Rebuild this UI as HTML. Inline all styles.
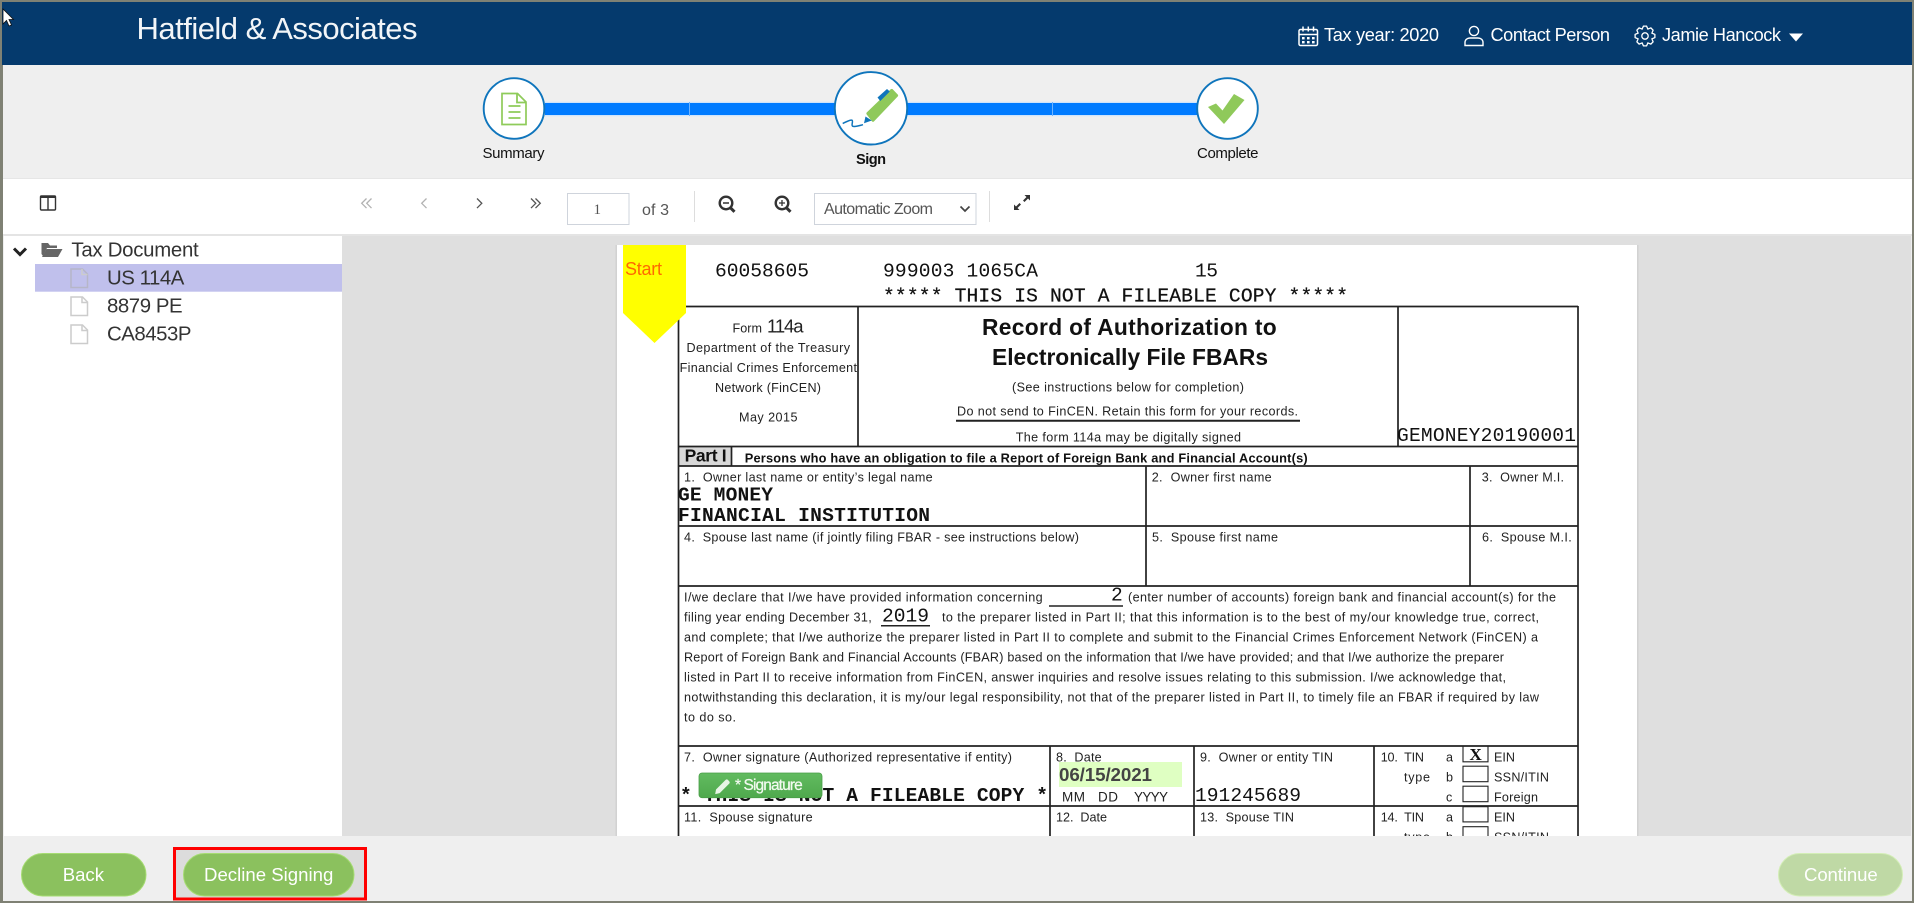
<!DOCTYPE html>
<html lang="en"><head><meta charset="utf-8"><title>Hatfield &amp; Associates</title>
<style>
html,body{margin:0;padding:0;width:1914px;height:903px;overflow:hidden;background:#efefef}
svg{display:block;position:absolute;left:0;top:0}
text{font-family:"Liberation Sans",Arial,sans-serif;white-space:pre}
.m{font-family:"Liberation Mono",monospace;font-size:19.6px;fill:#111}
.mb{font-family:"Liberation Mono",monospace;font-size:19.6px;fill:#111;font-weight:bold}
.f{font-size:12.6px;fill:#222}
.h{font-size:18.2px;fill:#fff}
.s{font-size:20.4px;fill:#333}
.b{font-size:18.6px;fill:#fff}
.l{stroke:#222;stroke-width:1.7;fill:none}
</style></head><body>
<svg width="1914" height="903" viewBox="0 0 1914 903" xmlns="http://www.w3.org/2000/svg">
<rect width="1914" height="903" fill="#7f8174"/>
<rect x="3" y="65" width="1909" height="836" fill="#efefef"/>
<rect x="2" y="2" width="1910" height="63" fill="#053a6d"/>
<text x="136.5" y="39" font-size="31" fill="#f2f5f8" textLength="281">Hatfield &amp; Associates</text>

<!-- calendar -->
<g fill="none" stroke="#fff" stroke-width="1.5">
<rect x="1299" y="29.5" width="18.5" height="16" rx="1.5"/>
<path d="M1299 34.5h18.5M1303 26.5v5M1308.3 26.5v5M1313.5 26.5v5"/>
</g>
<g fill="#fff"><rect x="1302" y="37" width="2.6" height="2.4"/><rect x="1307" y="37" width="2.6" height="2.4"/><rect x="1312" y="37" width="2.6" height="2.4"/><rect x="1302" y="41" width="2.6" height="2.4"/><rect x="1307" y="41" width="2.6" height="2.4"/><rect x="1312" y="41" width="2.6" height="2.4"/></g>
<text class="h" x="1324" y="41" textLength="115">Tax year: 2020</text>
<!-- user -->
<g fill="none" stroke="#fff" stroke-width="1.4">
<circle cx="1474" cy="31" r="4.6"/>
<path d="M1465 45.5v-3c0-3 2.5-4.500 5-4.500h8c2.500 0 5 1.500 5 4.500v3z"/>
</g>
<text class="h" x="1490.500" y="41" textLength="119.500">Contact Person</text>
<!-- gear -->
<g transform="translate(1645 36)" fill="none" stroke="#fff" stroke-width="1.300">
<path d="M9.88-1.56L9.88 1.56 6.93 2.87 8.09 5.88 5.88 8.09 2.87 6.93 1.56 9.88-1.56 9.88-2.87 6.93-5.88 8.09-8.09 5.88-6.93 2.87-9.88 1.56-9.88-1.56-6.93-2.87-8.09-5.88-5.88-8.09-2.87-6.93-1.56-9.88 1.56-9.88 2.87-6.93 5.88-8.09 8.09-5.88 6.93-2.87Z"/>
<circle r="3.200"/>
</g>
<text class="h" x="1662" y="41" textLength="119">Jamie Hancock</text>
<path d="M1789 33.500h14l-7 8z" fill="#fff"/>

<!-- cursor -->
<path d="M3 9v15l3.500-3.500 2.500 5.500 2.500-1-2.500-5.500h4.500z" fill="#fff" stroke="#111" stroke-width=".8"/>

<!-- stepper -->
<rect x="545" y="101.800" width="652" height="14.500" fill="#cfe4fb"/>
<rect x="545" y="103" width="652" height="12" fill="#007bff"/>
<rect x="689" y="102" width="1" height="14" fill="#6fb4ff"/>
<rect x="1052" y="102" width="1" height="14" fill="#6fb4ff"/>
<g fill="#fff" stroke="#0f75bc" stroke-width="1.900">
<circle cx="514" cy="108.500" r="30.300"/>
<circle cx="871" cy="108.300" r="36.200"/>
<circle cx="1227.500" cy="108.500" r="30.300"/>
</g>
<g fill="none" stroke="#8fcb5a" stroke-width="1.700">
<path d="M502 93.500h15.500l8.500 8.500v22.500h-24z"/>
<path d="M517 93.500v9h9M508.500 106h12M508.500 112h12M508.500 118h12" stroke-width="1.800"/>
</g>
<!-- pen -->
<path d="M866.700 112.500L890.700 89.300c.7-.6 1.500-.6 2 0l5 5.200c.6.600.6 1.400 0 2L874 121.400c-.6.600-1.400.6-2 0l-5.300-6.900c-.5-.6-.5-1.400 0-2z" fill="#8fc95a"/>
<path d="M877.500 97.500l9.500-8.500 2.800 2.500-9.500 9.500z" fill="#0f75bc"/>
<path d="M865.500 116.500l6.300 4-7.800 2.800z" fill="#0f75bc"/>
<path d="M842.700 123.500c3-1.500 7.500-4 9.300-3.300 1.500.7-1 5 .6 6 2.400 1 6.500-.5 10.400-1.500" fill="none" stroke="#0f75bc" stroke-width="1.500"/>
<!-- check -->
<path d="M1208 107l8-3.500 6.500 7L1234 94l10.500 6-20.500 24z" fill="#8fc95a"/>
<text x="482.500" y="158" font-size="15" fill="#111" textLength="62">Summary</text>
<text x="856" y="164" font-size="14.600" font-weight="bold" fill="#111" textLength="30">Sign</text>
<text x="1197" y="158" font-size="15" fill="#111" textLength="61.500">Complete</text>

<!-- toolbar -->
<rect x="3" y="178.500" width="1909" height="55.500" fill="#fff"/>
<rect x="3" y="178" width="1909" height="1" fill="#e6e6e6"/>
<rect x="3" y="234" width="1909" height="2" fill="#e4e4e4"/>
<g fill="none" stroke="#333" stroke-width="1.400"><rect x="40.500" y="196" width="15" height="14" rx="1"/><path d="M48 196v14"/><path d="M40.500 197h15" stroke-width="2"/></g>
<g fill="none" stroke="#b2b2b2" stroke-width="1.300">
<path d="M366.500 198.500l-4.800 4.800 4.800 4.800M371.500 198.500l-4.800 4.800 4.800 4.800"/>
<path d="M426.500 198.500l-4.800 4.800 4.800 4.800"/>
</g>
<g fill="none" stroke="#555" stroke-width="1.300">
<path d="M477 198.500l4.800 4.800-4.800 4.800"/>
<path d="M531 198.500l4.800 4.800-4.800 4.800M535.500 198.500l4.800 4.800-4.800 4.800"/>
</g>
<rect x="567.500" y="193.500" width="61.500" height="31" fill="#fff" stroke="#cfd4dc"/>
<text x="593.500" y="214" font-size="15" fill="#555" style='font-family:"Liberation Serif",serif'>1</text>
<text x="642" y="215" font-size="16" fill="#555" textLength="27">of 3</text>
<rect x="694" y="191" width="1" height="31" fill="#ddd"/>
<g fill="none" stroke="#333" stroke-width="2.400">
<circle cx="726" cy="203" r="6.300"/><path d="M730.500 207.800l4 4" stroke-width="3"/><path d="M723 203h6" stroke-width="1.500"/>
<circle cx="782" cy="203" r="6.300"/><path d="M786.500 207.800l4 4" stroke-width="3"/><path d="M779 203h6M782 200v6" stroke-width="1.300"/>
</g>
<rect x="814.500" y="193.500" width="161.500" height="31" fill="#fff" stroke="#cfd4dc"/>
<text x="824" y="214" font-size="16" fill="#555" textLength="109">Automatic Zoom</text>
<path d="M960.500 206.500l4.500 4.500 4.500-4.500" fill="none" stroke="#444" stroke-width="1.700"/>
<rect x="989" y="191" width="1" height="31" fill="#ddd"/>
<g fill="#333"><path d="M1024.500 195h5.500v5.500l-2-2-3.500 3.500-1.500-1.500 3.500-3.500z"/><path d="M1019.500 210h-5.500v-5.500l2 2 3.500-3.500 1.500 1.500-3.500 3.500z"/></g>

<!-- sidebar -->
<rect x="4" y="236" width="338" height="600" fill="#fff"/>
<path d="M14 248.500l6 6 6-6" fill="none" stroke="#222" stroke-width="3"/>
<path d="M41.500 254V243h6.500l2 2.500h7v2.500H47l-4 8z" fill="#666"/><path d="M46.500 249h16l-4.500 8H42z" fill="#666"/>
<text class="s" x="71.400" y="256.700" textLength="127.300">Tax Document</text>
<rect x="35" y="264" width="307" height="27.700" fill="#c0c0ec"/>
<text class="s" x="107" y="284.300" textLength="77.400">US 114A</text>
<text class="s" x="107" y="312.300" textLength="75.600">8879 PE</text>
<text class="s" x="107" y="340.300" textLength="84.500">CA8453P</text>
<g fill="#fff" stroke="#ccc" stroke-width="1.500">
<path d="M71 269h11.500l5 5v13.500h-16.500z" fill="#c0c0ec" stroke="#b6b6c8"/>
<path d="M71 297h11.500l5 5v13.500h-16.500z"/>
<path d="M71 325h11.500l5 5v13.500h-16.500z"/>
<path d="M82 269v5.500h5.500M82 297v5.500h5.500M82 325v5.500h5.500" fill="none"/>
</g>

<!-- viewer -->
<rect x="342" y="236" width="1569" height="600" fill="#dfdfdf"/>
<rect x="615.500" y="245" width="1023" height="591" fill="#d2d2d2"/>
<rect x="617" y="245" width="1020" height="591" fill="#fff"/>

<!-- form top -->
<text class="m" x="715" y="276.700" textLength="94">60058605</text>
<text class="m" x="883" y="276.700" textLength="155">999003 1065CA</text>
<text class="m" x="1195" y="276.700" textLength="23">15</text>
<text class="m" x="883" y="301.700" textLength="465" stroke="#111" stroke-width=".25">***** THIS IS NOT A FILEABLE COPY *****</text>

<!-- form lines -->
<rect x="678.500" y="446.500" width="53" height="19" fill="#d8d8d8"/>
<g class="l">
<path d="M678 306.500H1578M678 446.500H1578M678 466H1578M678 526H1578M678 586H1578M678 746H1578M678 806H1578"/>
<path d="M678.500 306V836M1578 306V836"/>
<path d="M858 306V446M1398 306V446M731.500 446V466"/>
<path d="M1146 466V586M1470 466V586"/>
<path d="M1050 746V836M1194 746V836M1374 746V836"/>
<path d="M956 420.800H1300" stroke-width="2"/>
<path d="M1049 606H1123M881 625.800H930" stroke-width="1.500"/>
</g>
<g fill="none" stroke="#222" stroke-width="1.100">
<path d="M1463 746.500V761.800H1488V746.500"/>
<rect x="1463" y="766.200" width="25" height="15.500"/>
<rect x="1463" y="786.200" width="25" height="15.500"/>
<rect x="1463" y="806.700" width="25" height="15.200"/>
<rect x="1463" y="826.700" width="25" height="15.200"/>
</g>

<text class="f" x="732.500" y="332.700" textLength="29.500">Form</text>
<text x="767" y="332.700" font-size="18.500" fill="#222" textLength="36.500">114a</text>
<text class="f" x="686.500" y="352" textLength="163.500">Department of the Treasury</text>
<text class="f" x="679.600" y="372" textLength="177.400">Financial Crimes Enforcement</text>
<text class="f" x="715" y="392" textLength="106">Network (FinCEN)</text>
<text class="f" x="739" y="421.700" textLength="58.500">May 2015</text>

<text x="982" y="335" font-size="22.800" font-weight="bold" fill="#111" textLength="294.700">Record of Authorization to</text>
<text x="992" y="365" font-size="22.800" font-weight="bold" fill="#111" textLength="276">Electronically File FBARs</text>
<text class="f" x="1012" y="391.700" textLength="232">(See instructions below for completion)</text>
<text class="f" x="957" y="415.700" textLength="341">Do not send to FinCEN. Retain this form for your records.</text>
<text class="f" x="1015.700" y="441.700" textLength="225.300">The form 114a may be digitally signed</text>
<text class="m" x="1397" y="441" textLength="179">GEMONEY20190001</text>

<text x="684.600" y="461.700" font-size="17.500" font-weight="bold" fill="#111" textLength="42">Part I</text>
<text x="744.700" y="462.300" font-size="12.800" font-weight="bold" fill="#111" textLength="563">Persons who have an obligation to file a Report of Foreign Bank and Financial Account(s)</text>

<text class="f" x="684" y="481.700" textLength="248.700">1.  Owner last name or entity’s legal name</text>
<text class="f" x="1151.700" y="481.700" textLength="120">2.  Owner first name</text>
<text class="f" x="1481.700" y="481.700" textLength="82.300">3.  Owner M.I.</text>
<text class="mb" x="678" y="500.700" textLength="95">GE MONEY</text>
<text class="mb" x="678" y="521" textLength="252">FINANCIAL INSTITUTION</text>
<text class="f" x="684" y="541.700" textLength="395">4.  Spouse last name (if jointly filing FBAR - see instructions below)</text>
<text class="f" x="1152" y="541.700" textLength="126">5.  Spouse first name</text>
<text class="f" x="1482" y="541.700" textLength="89.700">6.  Spouse M.I.</text>

<text class="f" x="684" y="601.700" textLength="358.700">I/we declare that I/we have provided information concerning</text>
<text class="m" x="1111" y="600.700">2</text>
<text class="f" x="1128" y="601.700" textLength="428">(enter number of accounts) foreign bank and financial account(s) for the</text>
<text class="f" x="684" y="621.700" textLength="187.700">filing year ending December 31,</text>
<text class="m" x="882" y="621.700" textLength="47">2019</text>
<text class="f" x="942" y="621.700" textLength="597">to the preparer listed in Part II; that this information is to the best of my/our knowledge true, correct,</text>
<text class="f" x="684" y="641.700" textLength="854">and complete; that I/we authorize the preparer listed in Part II to complete and submit to the Financial Crimes Enforcement Network (FinCEN) a</text>
<text class="f" x="684" y="661.700" textLength="820">Report of Foreign Bank and Financial Accounts (FBAR) based on the information that I/we have provided; and that I/we authorize the preparer</text>
<text class="f" x="684" y="681.700" textLength="822">listed in Part II to receive information from FinCEN, answer inquiries and resolve issues relating to this submission. I/we acknowledge that,</text>
<text class="f" x="684" y="701.700" textLength="855">notwithstanding this declaration, it is my/our legal responsibility, not that of the preparer listed in Part II, to timely file an FBAR if required by law</text>
<text class="f" x="684" y="721.700" textLength="52">to do so.</text>

<text class="f" x="684" y="761.700" textLength="328">7.  Owner signature (Authorized representative if entity)</text>
<text class="f" x="1056" y="761.700" textLength="45.700">8.  Date</text>
<text class="f" x="1200" y="761.700" textLength="133">9.  Owner or entity TIN</text>
<text class="f" x="1380.700" y="761.700" textLength="43.300">10.  TIN</text>
<text class="f" x="1446" y="761.700">a</text>
<text class="f" x="1494" y="761.700" textLength="21">EIN</text>
<text x="1469.500" y="760" font-size="17" font-weight="bold" fill="#111" style='font-family:"Liberation Serif",serif'>X</text>
<text class="f" x="1404" y="781.700" textLength="26">type</text>
<text class="f" x="1446" y="781.700">b</text>
<text class="f" x="1494" y="781.700" textLength="55">SSN/ITIN</text>
<text class="f" x="1446" y="801.700">c</text>
<text class="f" x="1494" y="801.700" textLength="44">Foreign</text>

<rect x="1059" y="762" width="123" height="25" fill="#dfffc2"/>
<text x="1059" y="781" font-size="18.800" font-weight="bold" fill="#444" textLength="93">06/15/2021</text>
<text x="1062" y="801.700" font-size="13.500" fill="#222" textLength="23">MM</text>
<text x="1098" y="801.700" font-size="13.500" fill="#222" textLength="20">DD</text>
<text x="1134" y="801.700" font-size="13.500" fill="#222" textLength="34">YYYY</text>
<text class="m" x="1195" y="801" textLength="106">191245689</text>
<text class="mb" x="680" y="801" textLength="368">* THIS IS NOT A FILEABLE COPY *</text>

<defs><linearGradient id="g" x1="0" y1="0" x2="0" y2="1"><stop offset="0" stop-color="#62bb60"/><stop offset="1" stop-color="#4fa94d"/></linearGradient></defs>
<rect x="699" y="773" width="123" height="24.700" rx="3" fill="url(#g)" stroke="#4a9f48" stroke-width=".8"/>
<path d="M716 789.500l9.500-9.500c.8-.8 1.800-.8 2.500 0l1.200 1.200c.7.7.7 1.700 0 2.400l-9.500 9.500-4.500 1z" fill="#e8f5e6"/>
<text x="735" y="790" font-size="15.500" fill="#f2faf0" stroke="#f2faf0" stroke-width=".25" textLength="67.700">* Signature</text>

<text class="f" x="684" y="821.700" textLength="128.700">11.  Spouse signature</text>
<text class="f" x="1056" y="821.700" textLength="51">12.  Date</text>
<text class="f" x="1200" y="821.700" textLength="94">13.  Spouse TIN</text>
<text class="f" x="1380.700" y="821.700" textLength="43.300">14.  TIN</text>
<text class="f" x="1446" y="821.700">a</text>
<text class="f" x="1494" y="821.700" textLength="21">EIN</text>
<text class="f" x="1404" y="841.700" textLength="26">type</text>
<text class="f" x="1446" y="841.700">b</text>
<text class="f" x="1494" y="841.700" textLength="55">SSN/ITIN</text>

<!-- start flag -->
<path d="M623 245H686V313L654.500 343 623 313Z" fill="#ffff00"/>
<text x="625" y="275" font-size="18" fill="#ff6a00" textLength="37">Start</text>

<!-- bottom bar -->
<rect x="3" y="836" width="1909" height="65" fill="#efefef"/>
<rect x="21.500" y="853.500" width="124.500" height="42.500" rx="21.200" fill="#8bc15e" stroke="#a6dc72"/>
<text class="b" x="62.700" y="881" textLength="41.300">Back</text>
<rect x="176" y="849.500" width="188" height="49" fill="#dcdcdc"/>
<rect x="183.500" y="853.500" width="170.500" height="42.500" rx="21.200" fill="#8bc15e" stroke="#a6dc72"/>
<text class="b" x="204" y="881" textLength="129.300">Decline Signing</text>
<rect x="174.500" y="848.500" width="191" height="50.500" fill="none" stroke="#ff0000" stroke-width="3"/>
<rect x="1778.500" y="853.500" width="124" height="42.500" rx="21.200" fill="#bfd9a5" stroke="#d3eeb6"/>
<text class="b" x="1804" y="881" textLength="73.700">Continue</text>
</svg>
</body></html>
